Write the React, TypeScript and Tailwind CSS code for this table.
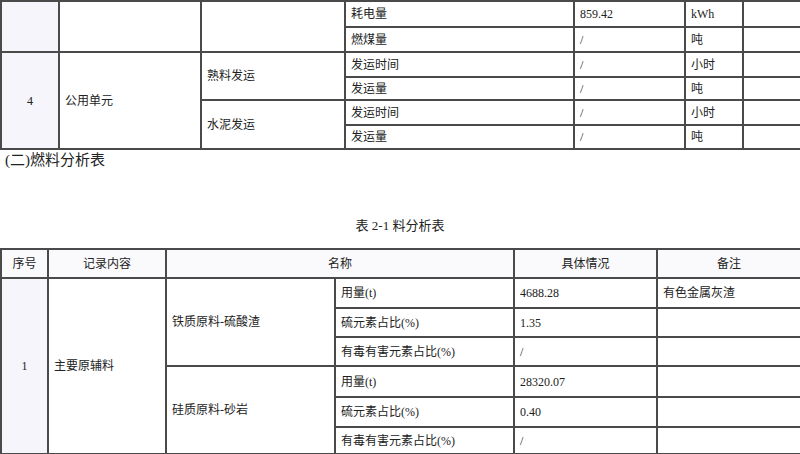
const td = 'border-2 border-[#4a4a4a] px-[5px] align-middle text-left whitespace-nowrap';
const tdShade = 'border-2 border-[#4a4a4a] bg-[#f5f5fb] align-middle text-center';
const th = 'border-2 border-[#4a4a4a] bg-[#fafafc] align-middle text-center font-normal';

const fuelRows = [
  { name: '铁质原料-硫酸渣', items: [['用量(t)', '4688.28', '有色金属灰渣'], ['硫元素占比(%)', '1.35', ''], ['有毒有害元素占比(%)', '/', '']] },
  { name: '硅质原料-砂岩', items: [['用量(t)', '28320.07', ''], ['硫元素占比(%)', '0.40', ''], ['有毒有害元素占比(%)', '/', '']] },
];
const heights = ['h-[30px]', 'h-[29px]', 'h-[29px]', 'h-[31px]', 'h-[30px]', 'h-[27px]'];

export default function App() {
  return (
    <div
      className="w-[800px] h-[454px] overflow-hidden bg-white text-[#222]"
      style={{ fontFamily: '"Liberation Serif", "Noto Sans CJK SC", serif' }}
    >
      <table className="w-[800px] table-fixed border-collapse text-[12px]">
        <colgroup>
          <col className="w-[58px]" />
          <col className="w-[142px]" />
          <col className="w-[144px]" />
          <col className="w-[229px]" />
          <col className="w-[111px]" />
          <col className="w-[58px]" />
          <col className="w-[58px]" />
        </colgroup>
        <tbody>
          <tr className="h-[26px]">
            <td rowSpan={2} className={tdShade}></td>
            <td rowSpan={2} className={td}></td>
            <td rowSpan={2} className={td}></td>
            <td className={td}>耗电量</td>
            <td className={td}>859.42</td>
            <td className={td}>kWh</td>
            <td className={td}></td>
          </tr>
          <tr className="h-[25px]">
            <td className={td}>燃煤量</td>
            <td className={td}>/</td>
            <td className={td}>吨</td>
            <td className={td}></td>
          </tr>
          <tr className="h-[25px]">
            <td rowSpan={4} className={tdShade}>4</td>
            <td rowSpan={4} className={td}>公用单元</td>
            <td rowSpan={2} className={td}>熟料发运</td>
            <td className={td}>发运时间</td>
            <td className={td}>/</td>
            <td className={td}>小时</td>
            <td className={td}></td>
          </tr>
          <tr className="h-[23px]">
            <td className={td}>发运量</td>
            <td className={td}>/</td>
            <td className={td}>吨</td>
            <td className={td}></td>
          </tr>
          <tr className="h-[25px]">
            <td rowSpan={2} className={td}>水泥发运</td>
            <td className={td}>发运时间</td>
            <td className={td}>/</td>
            <td className={td}>小时</td>
            <td className={td}></td>
          </tr>
          <tr className="h-[24px]">
            <td className={td}>发运量</td>
            <td className={td}>/</td>
            <td className={td}>吨</td>
            <td className={td}></td>
          </tr>
        </tbody>
      </table>

      <p className="pl-[5px] text-[15px] leading-[20px]">(二)燃料分析表</p>

      <p className="mt-[46px] text-center text-[13px] leading-[20px]">表 2-1 料分析表</p>

      <table className="mt-[12px] w-[800px] table-fixed border-collapse text-[12px]">
        <colgroup>
          <col className="w-[47px]" />
          <col className="w-[118px]" />
          <col className="w-[169px]" />
          <col className="w-[179px]" />
          <col className="w-[143px]" />
          <col className="w-[144px]" />
        </colgroup>
        <thead>
          <tr className="h-[29px]">
            <th className={th}>序号</th>
            <th className={th}>记录内容</th>
            <th colSpan={2} className={th}>名称</th>
            <th className={th}>具体情况</th>
            <th className={th}>备注</th>
          </tr>
        </thead>
        <tbody>
          {fuelRows.map((group, gi) =>
            group.items.map((item, ii) => (
              <tr key={`${gi}-${ii}`} className={heights[gi * 3 + ii]}>
                {gi === 0 && ii === 0 && (
                  <>
                    <td rowSpan={6} className={tdShade}>1</td>
                    <td rowSpan={6} className={td}>主要原辅料</td>
                  </>
                )}
                {ii === 0 && <td rowSpan={3} className={td}>{group.name}</td>}
                <td className={td}>{item[0]}</td>
                <td className={td}>{item[1]}</td>
                <td className={td}>{item[2]}</td>
              </tr>
            ))
          )}
        </tbody>
      </table>
    </div>
  );
}
